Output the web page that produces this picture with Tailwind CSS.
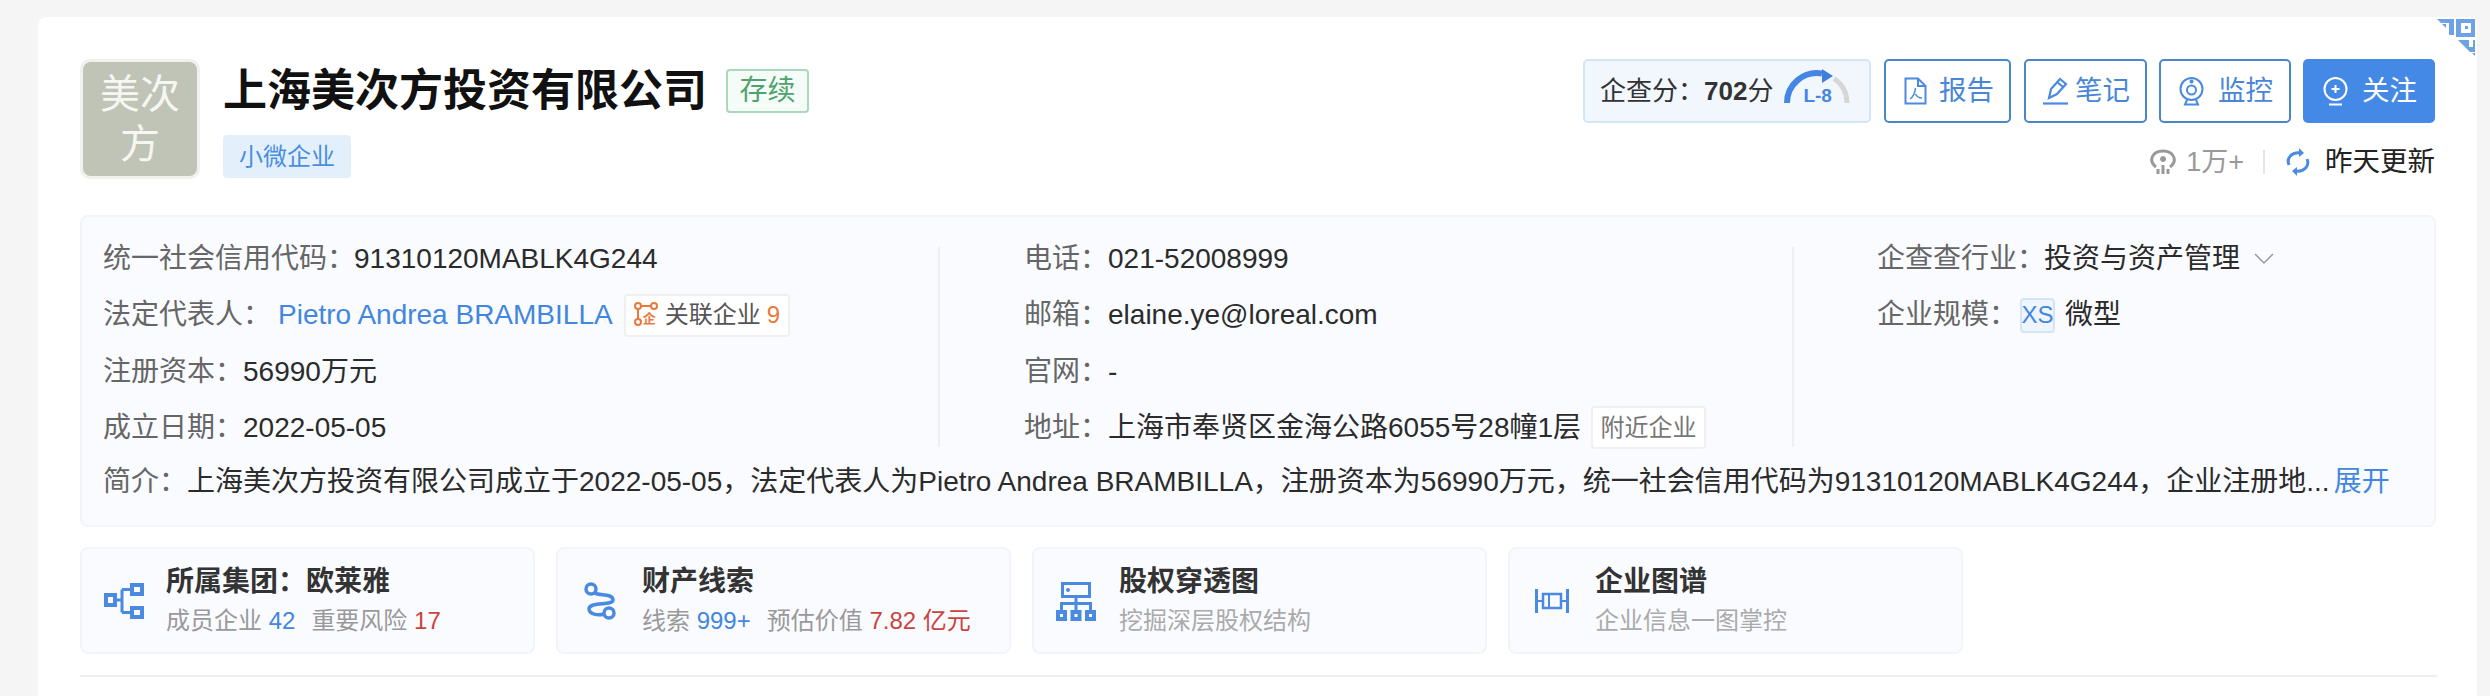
<!DOCTYPE html>
<html lang="zh-CN">
<head>
    <meta charset="UTF-8">
    <title>上海美次方投资有限公司</title>
    <script src="https://cdn.jsdelivr.net/npm/@tailwindcss/browser@4"></script>
</head>
<body class="bg-[#f5f5f5] h-[696px] overflow-hidden pt-[17px] pl-[38px] text-[28px] text-[#222] [font-family:'Liberation_Sans','Noto_Sans_CJK_SC',sans-serif]">
    <div class="relative w-[2439px] h-[679px] bg-white rounded-t-[8px] px-[42px] pt-[42px]">
        <!-- qr corner -->
        <svg class="absolute right-0 top-[1px] w-[40px] h-[40px]" viewBox="0 0 40 40">
            <g fill="#6ea2e6">
                <path d="M0 1H17V17H12V5H4Z"/>
                <path d="M5 6H9V10Z"/>
                <path d="M19 1H38V19H19ZM24 5V15H34V5Z" fill-rule="evenodd"/>
                <rect x="28" y="8" width="3" height="3"/>
                <path d="M21 22H32V29H36V22H38V34H33Z"/>
                <path d="M35 35H38V38Z"/>
            </g>
        </svg>

        <!-- header -->
        <div class="flex justify-between h-[156px]">
            <div class="flex">
                <div class="w-[120px] h-[120px] p-[3px] bg-[#f0f0ec] rounded-[10px]">
                    <div class="w-full h-full bg-[#c0c4b7] rounded-[8px] flex items-center justify-center text-center text-[40px] leading-[50px] text-[#f6f6f2]">美次<br>方</div>
                </div>
                <div class="ml-[23px]">
                    <div class="flex items-center mt-[9px] h-[46px]">
                        <h1 class="text-[44px] leading-[46px] font-bold text-[#111]">上海美次方投资有限公司</h1>
                        <span class="ml-[19px] w-[83px] h-[44px] border-2 border-[#a8d8bd] rounded-[4px] bg-[#f5fbf7] text-[#4fa36e] flex items-center justify-center leading-none">存续</span>
                    </div>
                    <div class="mt-[21px] w-[128px] h-[43px] bg-[#e3f0fc] rounded-[4px] text-[#4a8ee0] text-[24px] flex items-center justify-center">小微企业</div>
                </div>
            </div>
            <div class="flex flex-col items-end">
                <div class="flex h-[64px]">
                    <div class="w-[288px] bg-[#f1f7fc] border-2 border-[#d4e6f6] rounded-[5px] flex items-center pl-[15px] text-[26px] text-[#333]">
                        <span>企查分：</span><b class="text-[#333]">702</b><span>分</span>
                        <div class="relative ml-[11px] mb-[8px] w-[66px] h-[36px]">
                            <svg class="w-[66px] h-[36px]" viewBox="0 0 66 36">
                                <path d="M3 34A30 30 0 0 1 38 4.500" fill="none" stroke="#4586e5" stroke-width="6"/>
                                <path d="M38 0L49 7L38 14Z" fill="#3f7fdb"/>
                                <path d="M50 9.500A30 30 0 0 1 63 34" fill="none" stroke="#d6d6d6" stroke-width="5"/>
                            </svg>
                            <span class="absolute left-[19px] bottom-0 text-[19px] leading-[18px] font-bold text-[#4586e5]">L-8</span>
                        </div>
                    </div>
                    <button class="ml-[13px] w-[127px] border-2 border-[#4a86c8] rounded-[5px] flex items-center pl-[18px] text-[27.5px] text-[#4a86d8]">
                        <svg class="w-[23px] h-[28px]" viewBox="0 0 23 28" fill="none" stroke="#4a8ae0" stroke-width="2"><path d="M1.5 1.5H14L21.5 9V26.5H1.5Z"/><path d="M14 1.5V9H21.5"/><path d="M11.5 11C11 16 9 20 6 22M11.5 17C13 20 15 21 18 21" stroke-width="1.5"/></svg>
                        <span class="ml-[12px]">报告</span>
                    </button>
                    <button class="ml-[13px] w-[123px] border-2 border-[#4a86c8] rounded-[5px] flex items-center pl-[16px] text-[27.5px] text-[#4a86d8]">
                        <svg class="w-[27px] h-[28px]" viewBox="0 0 27 28" fill="none" stroke="#4a8ae0" stroke-width="2.2"><path d="M7 21L9 12L18 2L24 7L15 17Z"/><path d="M15 5L21 10"/><path d="M1 26.5H26"/></svg>
                        <span class="ml-[6px]">笔记</span>
                    </button>
                    <button class="ml-[12px] w-[132px] border-2 border-[#4a86c8] rounded-[5px] flex items-center pl-[18px] text-[27.5px] text-[#4a86d8]">
                        <svg class="w-[25px] h-[29px]" viewBox="0 0 25 29" fill="none" stroke="#4a8ae0" stroke-width="2"><circle cx="12.5" cy="12" r="11"/><circle cx="12.5" cy="13" r="4.5"/><circle cx="12.5" cy="4.5" r="1" fill="#4a8ae0"/><path d="M8 23L6 27.5H19L17 23"/></svg>
                        <span class="ml-[14px]">监控</span>
                    </button>
                    <button class="ml-[12px] w-[132px] bg-[#4589e6] rounded-[5px] flex items-center pl-[20px] text-[27.5px] text-white">
                        <svg class="w-[25px] h-[29px]" viewBox="0 0 25 29" fill="none" stroke="#fff" stroke-width="2"><circle cx="12.5" cy="12" r="11"/><path d="M12.5 8V16M8.5 12H16.5"/><path d="M6 27.5H19"/></svg>
                        <span class="ml-[14px]">关注</span>
                    </button>
                </div>
                <div class="flex items-center h-[28px] mt-[25px]">
                    <svg class="w-[28px] h-[26px]" viewBox="0 0 28 26" fill="none" stroke="#999" stroke-width="3"><path d="M7 18C-1 12 3 2 14 2C25 2 29 12 21 18"/><circle cx="14" cy="10" r="2.5" fill="#999" stroke-width="1"/><path d="M9 25V20M14 25V16M19 25V20"/></svg>
                    <span class="ml-[9px] text-[#999] text-[27px]">1万+</span>
                    <span class="ml-[19px] w-[2px] h-[24px] bg-[#e5e5e5]"></span>
                    <svg class="ml-[21px] w-[24px] h-[28px]" viewBox="0 0 24 28" fill="none" stroke="#4a8ae0" stroke-width="3"><path d="M3 17C0 10 6 4 14 5"/><path d="M13 0L18 5L13 9Z" fill="#4a8ae0" stroke="none"/><path d="M21 11C24 18 18 24 10 23"/><path d="M11 19L6 23L11 28Z" fill="#4a8ae0" stroke="none"/></svg>
                    <span class="ml-[15px] text-[27.5px] text-[#222]">昨天更新</span>
                </div>
            </div>
        </div>

        <!-- info -->
        <div class="w-[2356px] h-[312px] bg-[#f9fbfe] border-2 border-[#f1f4f9] rounded-[8px] pt-[14px]">
            <div class="flex h-[225px] text-[#2b2b2b]">
                <div class="w-[856px] pl-[21px] flex flex-col">
                    <div class="h-[56.3px] flex items-center"><span class="text-[#666]">统一社会信用代码：</span><span class="-ml-[1px]">91310120MABLK4G244</span></div>
                    <div class="h-[56.3px] flex items-center"><span class="text-[#666]">法定代表人：</span><a class="ml-[7px] text-[#4286e0]">Pietro Andrea BRAMBILLA</a>
                        <span class="ml-[11px] w-[166px] h-[43px] bg-white border-2 border-[#f0f0f0] rounded-[4px] flex items-center pl-[8px] text-[24px] text-[#555]">
                            <span class="relative w-[24px] h-[26px]">
                                <svg class="w-[24px] h-[26px]" viewBox="0 0 24 26" fill="none" stroke="#e8793d" stroke-width="2"><circle cx="4" cy="4" r="3"/><circle cx="20" cy="4" r="3"/><circle cx="4" cy="20" r="3"/><path d="M7 4H17M4 7V17"/></svg>
                                <span class="absolute left-[9px] bottom-[2px] text-[13px] leading-[14px] font-bold text-[#e8793d]">企</span>
                            </span>
                            <span class="ml-[7px]">关联企业</span><span class="ml-[6px] text-[#e8793d]">9</span>
                        </span>
                    </div>
                    <div class="h-[56.3px] flex items-center"><span class="text-[#666]">注册资本：</span><span>56990万元</span></div>
                    <div class="h-[56.3px] flex items-center"><span class="text-[#666]">成立日期：</span><span>2022-05-05</span></div>
                </div>
                <div class="w-[2px] h-[200px] mt-[16px] bg-[#eceff4]"></div>
                <div class="w-[852px] pl-[84px] flex flex-col">
                    <div class="h-[56.3px] flex items-center"><span class="text-[#666]">电话：</span><span>021-52008999</span></div>
                    <div class="h-[56.3px] flex items-center"><span class="text-[#666]">邮箱：</span><span>elaine.ye@loreal.com</span></div>
                    <div class="h-[56.3px] flex items-center"><span class="text-[#666]">官网：</span><span>-</span></div>
                    <div class="h-[56.3px] flex items-center"><span class="text-[#666]">地址：</span><span>上海市奉贤区金海公路6055号28幢1层</span>
                        <span class="ml-[10px] w-[115px] h-[43px] bg-white border-2 border-[#f0f0f0] rounded-[4px] flex items-center justify-center text-[24px] text-[#777]">附近企业</span>
                    </div>
                </div>
                <div class="w-[2px] h-[200px] mt-[16px] bg-[#eceff4]"></div>
                <div class="pl-[83px] flex flex-col">
                    <div class="h-[56.3px] flex items-center"><span class="text-[#666]">企查查行业：</span><span class="-ml-[1px]">投资与资产管理</span>
                        <svg class="ml-[14px] w-[20px] h-[12px]" viewBox="0 0 20 12" fill="none" stroke="#999" stroke-width="1.5"><path d="M1 1L10 10L19 1"/></svg>
                    </div>
                    <div class="h-[56.3px] flex items-center"><span class="text-[#666]">企业规模：</span>
                        <span class="ml-[3px] w-[35px] h-[35px] bg-[#eef5fc] border-2 border-[#d4e6f6] rounded-[4px] flex items-center justify-center text-[24px] text-[#4286e0]">XS</span>
                        <span class="ml-[10px]">微型</span>
                    </div>
                </div>
            </div>
            <div class="h-[52px] pl-[21px] flex items-center whitespace-nowrap text-[#2b2b2b]"><span class="text-[#666]">简介：</span><span>上海美次方投资有限公司成立于2022-05-05，法定代表人为Pietro Andrea BRAMBILLA，注册资本为56990万元，统一社会信用代码为91310120MABLK4G244，企业注册地...</span><a class="ml-[4px] text-[#4286e0]">展开</a></div>
        </div>

        <!-- quick cards -->
        <div class="flex gap-[21px] mt-[20px]">
            <div class="w-[455px] h-[107px] bg-[#f9fbfe] border-2 border-[#f1f4f9] rounded-[8px] flex items-center pl-[22px]">
                <svg class="w-[40px] h-[36px] shrink-0" viewBox="0 0 40 36" fill="none" stroke="#4a8ae0" stroke-width="4"><rect x="2" y="12" width="9" height="10"/><rect x="28" y="2" width="10" height="9"/><rect x="28" y="25" width="10" height="9"/><path d="M12 17H18M18 6.5V29.5M18 6.5H26M18 29.5H26" stroke-width="3"/></svg>
                <div class="ml-[22px]">
                    <div class="font-bold text-[#333] leading-[38px]">所属集团：欧莱雅</div>
                    <div class="text-[24px] leading-[34px] text-[#999] mt-[3px]">成员企业 <span class="text-[#4286e0]">42</span><span class="ml-[16px]">重要风险</span> <span class="text-[#c9443f]">17</span></div>
                </div>
            </div>
            <div class="w-[455px] h-[107px] bg-[#f9fbfe] border-2 border-[#f1f4f9] rounded-[8px] flex items-center pl-[26px]">
                <svg class="w-[32px] h-[38px] shrink-0" viewBox="0 0 32 38" fill="none" stroke="#4a8ae0" stroke-width="3.5"><circle cx="7" cy="7" r="5"/><circle cx="25" cy="31" r="5"/><path d="M11 11C15 14 29 11 29 18C29 24 5 19 5 27C5 32 14 34 20 32"/></svg>
                <div class="ml-[26px]">
                    <div class="font-bold text-[#333] leading-[38px]">财产线索</div>
                    <div class="text-[24px] leading-[34px] text-[#999] mt-[3px]">线索 <span class="text-[#4286e0]">999+</span><span class="ml-[16px]">预估价值</span> <span class="text-[#c9443f]">7.82 亿元</span></div>
                </div>
            </div>
            <div class="w-[455px] h-[107px] bg-[#f9fbfe] border-2 border-[#f1f4f9] rounded-[8px] flex items-center pl-[22px]">
                <svg class="w-[40px] h-[40px] shrink-0" viewBox="0 0 40 40"><rect x="6.5" y="2.5" width="27" height="13" fill="none" stroke="#4a8ae0" stroke-width="3"/><circle cx="12" cy="9" r="2" fill="#4a8ae0"/><path d="M20 16V22M5.5 29V22.5H34.5V29M20 22V29" fill="none" stroke="#4a8ae0" stroke-width="3"/><path d="M0 29H11V40H0ZM14.500 29H25.500V40H14.500ZM29 29H40V40H29Z" fill="#4a8ae0"/><path d="M4 33H7V36H4ZM18.500 33H21.500V36H18.500ZM33 33H36V36H33Z" fill="#f9fbfe"/></svg>
                <div class="ml-[23px]">
                    <div class="font-bold text-[#333] leading-[38px]">股权穿透图</div>
                    <div class="text-[24px] leading-[34px] text-[#aaa] mt-[3px]">挖掘深层股权结构</div>
                </div>
            </div>
            <div class="w-[455px] h-[107px] bg-[#f9fbfe] border-2 border-[#f1f4f9] rounded-[8px] flex items-center pl-[25px]">
                <svg class="w-[34px] h-[24px] shrink-0" viewBox="0 0 34 24" fill="none" stroke="#4a8ae0"><path d="M1.5 0V24M32.500 0V24" stroke-width="3"/><rect x="8" y="5" width="18" height="14" stroke-width="2.500"/><path d="M14 5V19M3 12H8M26 12H31" stroke-width="2"/></svg>
                <div class="ml-[26px]">
                    <div class="font-bold text-[#333] leading-[38px]">企业图谱</div>
                    <div class="text-[24px] leading-[34px] text-[#aaa] mt-[3px]">企业信息一图掌控</div>
                </div>
            </div>
        </div>
        <div class="mt-[21px] w-[2357px] h-[2px] bg-[#eeeeee]"></div>
    </div>
</body>
</html>
